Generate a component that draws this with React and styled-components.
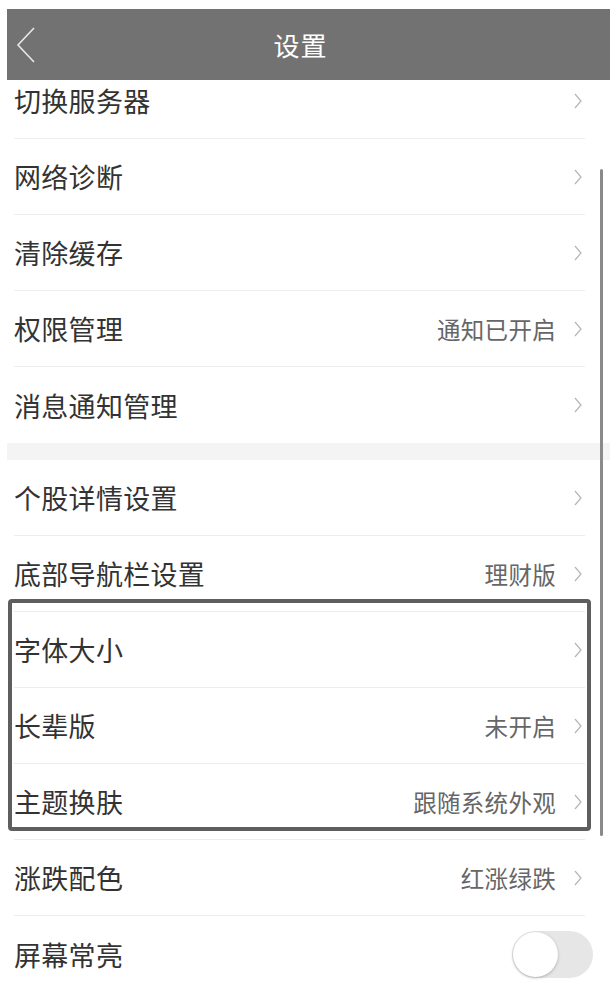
import React from "react";
import styled, {createGlobalStyle} from "styled-components";

const GlobalStyle = createGlobalStyle`
  html, body {
    margin: 0;
    padding: 0;
    background: #ffffff;
  }
  body {
    font-family: "Noto Sans CJK SC", "Noto Sans", sans-serif;
  }
`

const Screen = styled.div`
  position: relative;
  margin: 9px 0 0 7px;
  height: 982px;
  overflow: hidden;
  background: #ffffff;
`

const Header = styled.div`
  position: relative;
  z-index: 2;
  height: 71px;
  background: #727272;
  display: flex;
  align-items: center;
  justify-content: center;
  padding-right: 16px;
`

const BackButton = styled.div`
  position: absolute;
  left: 9px;
  top: 18px;
  width: 20px;
  height: 36px;
  display: flex;
`

const Title = styled.h1`
  margin: 0;
  color: #ffffff;
  font-size: 26px;
  font-weight: 400;
  letter-spacing: 1px;
`

const List = styled.div`
  margin-top: -17px;
`

const Row = styled.div`
  margin: 0 25px 0 7px;
  padding-right: 3px;
  display: flex;
  align-items: center;
  border-bottom: ${props => props.$last ? "none" : "1px solid #ededed"};
  height: ${props => props.$last ? "76px" : "75px"};
`

const Label = styled.span`
  flex: 1;
  font-size: 27px;
  color: #333333;
  letter-spacing: 0.3px;
`

const Value = styled.span`
  font-size: 23.5px;
  color: #666666;
  margin-right: 18px;
  letter-spacing: 0.3px;
`

const Gap = styled.div`
  height: 17px;
  background: #f4f4f4;
`

const Group = styled.div`
  position: relative;
`

const Frame = styled.div`
  position: absolute;
  top: -13px;
  bottom: 9px;
  left: 1px;
  right: 19px;
  border: 4px solid #5e5e5e;
  border-radius: 4px;
  pointer-events: none;
`

const Scrollbar = styled.div`
  position: absolute;
  left: 593px;
  top: 160px;
  width: 3px;
  height: 667px;
  background: #8a8a8a;
  border-radius: 2px;
`

const Track = styled.div`
  width: 81px;
  height: 47px;
  border-radius: 24px;
  background: #e6e6e6;
  margin-right: -11px;
  position: relative;
`

const Knob = styled.div`
  position: absolute;
  left: 1px;
  top: 1px;
  width: 45px;
  height: 45px;
  border-radius: 50%;
  background: #ffffff;
  box-shadow: 0 1px 3px rgba(0, 0, 0, 0.25);
`

const Chevron = () => (
    <svg width="8" height="16" viewBox="0 0 8 16">
        <path d="M1 1 L7 8 L1 15" fill="none" stroke="#b5b5b5" strokeWidth="1.2"/>
    </svg>
)

const Item = ({label, value, last, toggle}) => (
    <Row $last={last}>
        <Label>{label}</Label>
        {value && <Value>{value}</Value>}
        {toggle ? <Track><Knob/></Track> : <Chevron/>}
    </Row>
)

const App = () => {
    return (
        <Screen>
            <GlobalStyle/>
            <Header>
                <BackButton>
                    <svg width="20" height="36" viewBox="0 0 20 36">
                        <path d="M18 1 L2 18 L18 35" fill="none" stroke="#e8e8e8" strokeWidth="1.6"/>
                    </svg>
                </BackButton>
                <Title>设置</Title>
            </Header>
            <List>
                <Item label="切换服务器"/>
                <Item label="网络诊断"/>
                <Item label="清除缓存"/>
                <Item label="权限管理" value="通知已开启"/>
                <Item label="消息通知管理" last/>
                <Gap/>
                <Item label="个股详情设置"/>
                <Item label="底部导航栏设置" value="理财版"/>
                <Group>
                    <Item label="字体大小"/>
                    <Item label="长辈版" value="未开启"/>
                    <Item label="主题换肤" value="跟随系统外观"/>
                    <Frame/>
                </Group>
                <Item label="涨跌配色" value="红涨绿跌"/>
                <Item label="屏幕常亮" toggle last/>
            </List>
            <Scrollbar/>
        </Screen>
    );
}

export default App;
